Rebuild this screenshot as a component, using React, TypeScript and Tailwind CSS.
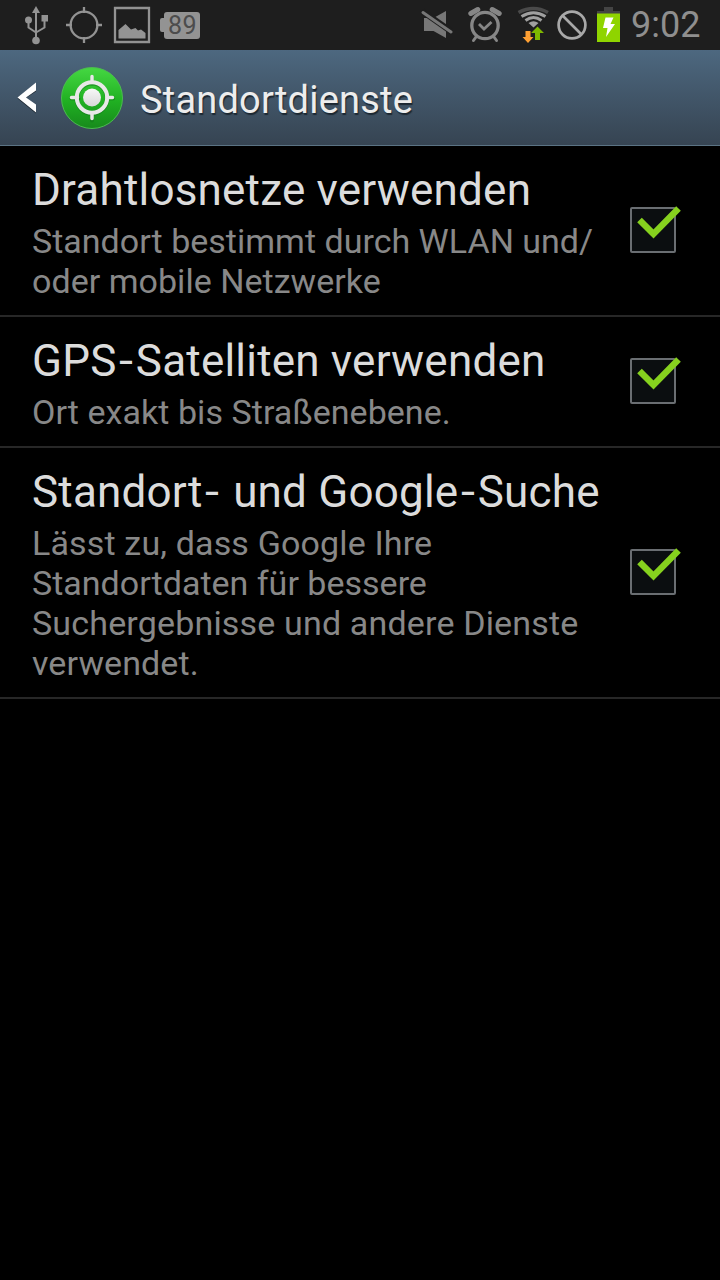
import React, { useState } from 'react';

interface LocationSetting {
  id: string;
  title: string;
  lines: { text: string; className: string }[];
}

const SETTINGS: LocationSetting[] = [
  {
    id: 'wireless',
    title: 'Drahtlosnetze verwenden',
    lines: [
      { text: 'Standort bestimmt durch WLAN und/', className: 'tracking-[0.01px]' },
      { text: 'oder mobile Netzwerke', className: 'tracking-[0.03px]' },
    ],
  },
  {
    id: 'gps',
    title: 'GPS-Satelliten verwenden',
    lines: [{ text: 'Ort exakt bis Straßenebene.', className: 'tracking-[0.05px]' }],
  },
  {
    id: 'google',
    title: 'Standort- und Google-Suche',
    lines: [
      { text: 'Lässt zu, dass Google Ihre', className: 'tracking-[0.15px]' },
      { text: 'Standortdaten für bessere', className: 'tracking-[0.01px]' },
      { text: 'Suchergebnisse und andere Dienste', className: 'tracking-[0.17px]' },
      { text: 'verwendet.', className: 'tracking-[0.1px]' },
    ],
  },
];

function UsbIcon() {
  return (
    <svg width="24" height="50" viewBox="24 0 24 50" fill="#939393">
      <g fill="none" stroke="#939393" strokeWidth="2">
        <path d="M36 11v29" />
        <path d="M28.500 20v7.500l7.500 5M44.500 18v9.500l-8.500 5" />
      </g>
      <path d="M36 6l4 7h-8z" />
      <circle cx="28.500" cy="20" r="3.500" />
      <path d="M41.500 15h6.500v6.500h-6.500z" />
      <circle cx="36" cy="40.500" r="3.800" />
    </svg>
  );
}

function GpsIcon() {
  return (
    <svg width="38" height="50" viewBox="65 0 38 50" fill="none" stroke="#939393" strokeWidth="2.300">
      <circle cx="84" cy="25" r="13.400" />
      <path d="M84 7v6M84 37v6M66 25h6M96 25h6" />
    </svg>
  );
}

function PictureIcon() {
  return (
    <svg width="38" height="50" viewBox="113 0 38 50">
      <path d="M115 8h34v34h-34z" fill="none" stroke="#939393" strokeWidth="2.300" />
      <path d="M118.500 38.500v-8.500l7-6 5.500 5.500 4.500-1.500 2.500 2.500 3-1 4.500 3.500v5.500z" fill="#939393" />
    </svg>
  );
}

function BatteryLevel() {
  return (
    <div className="flex h-[27px] items-center">
      <div className="h-[14px] w-[4px] rounded-l-[2px] bg-[#939393]" />
      <div className="flex h-[27px] w-[36px] items-center justify-center rounded-[3px] bg-[#939393] pl-px text-[25px] leading-[27px] tracking-[0.5px] text-[#4c4c4c]">
        89
      </div>
    </div>
  );
}

function MuteIcon() {
  return (
    <svg width="32" height="50" viewBox="421 0 32 50">
      <path d="M424 18h9.500l12.500-7v27l-12.500-7h-9.500z" fill="#777" />
      <path d="M422 11l30 21" stroke="#1e1e1e" strokeWidth="6" />
      <path d="M423 12.500l28 19.500" stroke="#777" strokeWidth="3" strokeLinecap="round" />
    </svg>
  );
}

function AlarmIcon() {
  return (
    <svg width="34" height="50" viewBox="468 0 34 50" fill="none" stroke="#868686">
      <circle cx="485" cy="25.500" r="13.200" strokeWidth="3.300" />
      <path d="M479 24l5 5 7.500-7" strokeWidth="2.800" />
      <path d="M470.800 13.500l7-4M499.200 13.500l-7-4" strokeWidth="5" strokeLinecap="round" />
      <path d="M476 37l-2.500 3.500M494 37l2.500 3.500" strokeWidth="3" strokeLinecap="round" />
    </svg>
  );
}

function WifiIcon() {
  return (
    <svg width="32" height="50" viewBox="517 0 32 50" fill="none">
      <path d="M518.500 12.500Q533.500 4.500 548 12.500" stroke="#4a4a4a" strokeWidth="3.500" />
      <path d="M521.500 16.500Q533.500 9 545.500 16.500" stroke="#a0a0a0" strokeWidth="3" />
      <path d="M525.500 20.500Q533.500 14.500 541.500 20.500" stroke="#a0a0a0" strokeWidth="3" />
      <path d="M528.500 23Q533.500 19.500 538.500 23L533.500 27.500z" fill="#a0a0a0" />
      <path d="M525.500 31h5v6h3l-5.500 6-5.500-6h3z" fill="#ffa033" />
      <path d="M537.500 26.500l6.500 6.500h-4v7h-5v-7h-4z" fill="#7fb800" />
    </svg>
  );
}

function BlockedIcon() {
  return (
    <svg width="30" height="50" viewBox="557.500 0 30 50" fill="none" stroke="#a8a8a8" strokeWidth="2.700">
      <circle cx="572.500" cy="25" r="13.400" />
      <path d="M563 15.500l19 19" />
    </svg>
  );
}

function ChargingIcon() {
  return (
    <svg width="23" height="50" viewBox="597 0 23 50">
      <path d="M604 7h9v4h7v3h-23v-3h7z" fill="#444" />
      <path d="M597 13.500h23v28.500h-23z" fill="#8fd400" />
      <path d="M605.500 17.500h8l-3 6.500h4.500l-9 13 1.500-9h-4.500z" fill="#fff" />
    </svg>
  );
}

function StatusBar() {
  return (
    <div className="flex h-[50px] items-center justify-between bg-[#1e1e1e] pl-6 pr-5">
      <div className="flex items-center">
        <UsbIcon />
        <div className="w-[17px]" />
        <GpsIcon />
        <div className="w-[10px]" />
        <PictureIcon />
        <div className="w-[9px]" />
        <BatteryLevel />
      </div>
      <div className="flex items-center">
        <MuteIcon />
        <div className="w-[15px]" />
        <AlarmIcon />
        <div className="w-[15px]" />
        <WifiIcon />
        <div className="w-[8px]" />
        <BlockedIcon />
        <div className="w-[10px]" />
        <ChargingIcon />
        <div className="w-[80px] whitespace-nowrap pl-[11px] text-[36px] leading-[50px] text-[#8f8f8f]">9:02</div>
      </div>
    </div>
  );
}

function LocationBadge() {
  return (
    <svg width="64" height="64" viewBox="60 66 64 64">
      <defs>
        <linearGradient id="badge" x1="0" y1="0" x2="0" y2="1">
          <stop offset="0" stopColor="#45d842" />
          <stop offset="0.550" stopColor="#20b022" />
          <stop offset="1" stopColor="#178a1c" />
        </linearGradient>
        <linearGradient id="target" x1="0" y1="0" x2="0" y2="1">
          <stop offset="0" stopColor="#f8f8f8" />
          <stop offset="1" stopColor="#d8d8d8" />
        </linearGradient>
      </defs>
      <circle cx="92" cy="98" r="30.500" fill="url(#badge)" stroke="#4cbb50" strokeWidth="1" />
      <g fill="none" stroke="#12731a" strokeOpacity="0.500">
        <circle cx="92" cy="98.500" r="15.200" strokeWidth="4.500" />
        <path d="M92 77.500v6M92 114v6.500M71.500 98.500h7M107 98.500h6" strokeWidth="4" strokeLinecap="round" />
      </g>
      <g fill="none" stroke="#e8e8e8">
        <circle cx="92" cy="97.500" r="15.200" strokeWidth="4" />
        <path d="M92 76.500v6M92 113v5.500M71.500 97.500h6M107 97.500h5.500" strokeWidth="3.500" strokeLinecap="round" />
      </g>
      <circle cx="92" cy="97.500" r="9" fill="url(#target)" />
    </svg>
  );
}

function ActionBar() {
  return (
    <div className="flex h-[96px] items-center border-b border-[#5b7384] bg-linear-to-b from-[#4d6880] to-[#364452] pl-4">
      <svg width="22" height="34" viewBox="16 81 22 34">
        <path d="M36 84v7.500L25 98.500l11 7.500v7.500L17.500 98.500z" fill="#1d2832" />
        <path d="M36 82.500v8L26 97.500l10 7v8L17.500 97.500z" fill="#fff" />
      </svg>
      <div className="ml-[22px]">
        <LocationBadge />
      </div>
      <h1 className="ml-4 pt-[5px] text-[38px] leading-[44px] tracking-[0.2px] text-[#ededed] [text-shadow:1px_2px_1px_#1d2832]">
        Standortdienste
      </h1>
    </div>
  );
}

interface CheckBoxProps {
  checked: boolean;
}

function CheckBox({ checked }: CheckBoxProps) {
  return (
    <svg width="54" height="50" viewBox="629 205 54 50">
      <rect x="631" y="208" width="44" height="44" rx="1" fill="#0b0e10" stroke="#6a6e72" strokeWidth="2" />
      {checked && <path d="M639.500 220L653.500 234L678.500 208.500" fill="none" stroke="#86d11e" strokeWidth="6.500" />}
    </svg>
  );
}

// Headings use a wider hyphen than the font provides
function SettingTitle({ title }: { title: string }) {
  return (
    <h2 className="text-[44px] leading-[52px] tracking-[0.2px] text-[#dcdcdc]">
      {title.split('-').map((part, index) => (
        <React.Fragment key={part}>
          {index > 0 && <span className="mx-[3.500px] inline-block scale-x-115">-</span>}
          {part}
        </React.Fragment>
      ))}
    </h2>
  );
}

function App() {
  const [enabled, setEnabled] = useState<Record<string, boolean>>({ wireless: true, gps: true, google: true });

  const toggle = (id: string) => {
    setEnabled((prev) => ({ ...prev, [id]: !prev[id] }));
  };

  return (
    <div className="min-h-[1280px] w-[720px] bg-black font-[Roboto,sans-serif]">
      <StatusBar />
      <ActionBar />
      <main>
        {SETTINGS.map((setting) => (
          <button
            key={setting.id}
            role="checkbox"
            aria-checked={enabled[setting.id]}
            onClick={() => toggle(setting.id)}
            className="flex w-full items-center justify-between border-b-2 border-[#272727] pb-[14px] pl-8 pr-[37px] pt-[18px] text-left"
          >
            <div className="whitespace-nowrap">
              <SettingTitle title={setting.title} />
              <div className="mt-[5px] text-[34px] leading-[40px] text-[#888]">
                {setting.lines.map((line) => (
                  <div key={line.text} className={line.className}>
                    {line.text}
                  </div>
                ))}
              </div>
            </div>
            <div className="-mt-1.5 shrink-0">
              <CheckBox checked={enabled[setting.id]} />
            </div>
          </button>
        ))}
      </main>
    </div>
  );
}

export default App;
